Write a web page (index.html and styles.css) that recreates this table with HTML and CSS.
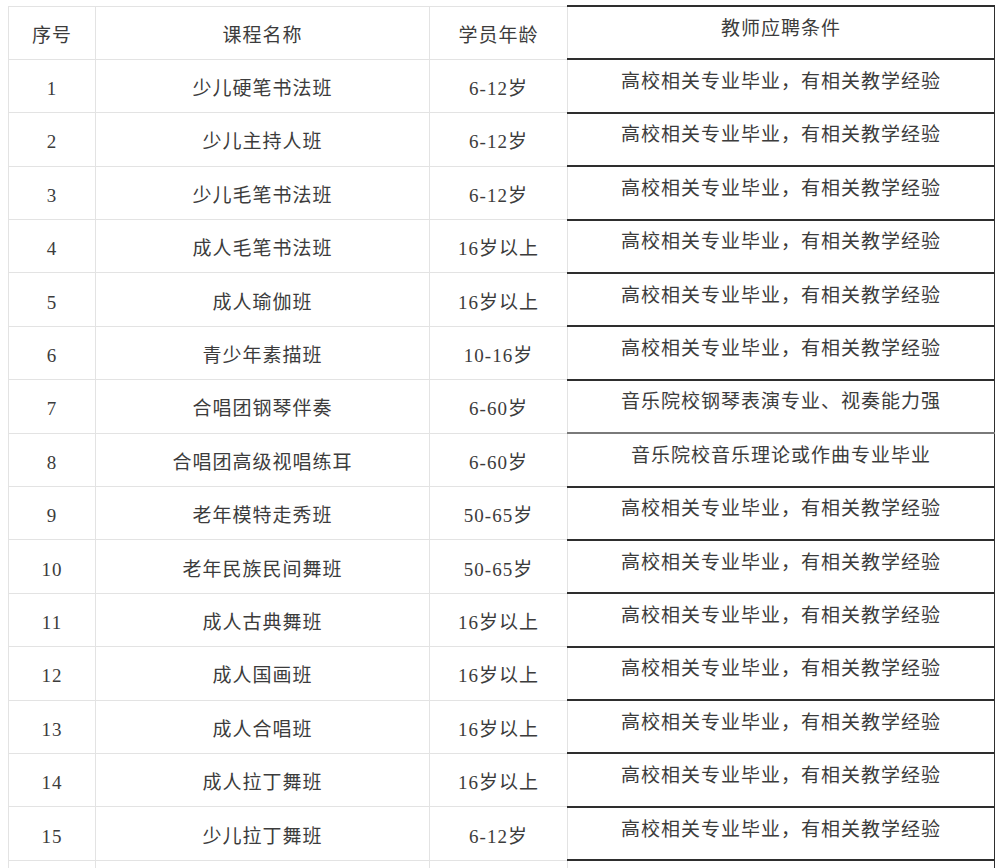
FILE: index.html
```html
<!DOCTYPE html>
<html lang="zh-CN">
<head>
<meta charset="utf-8">
<title>课程</title>
<link rel="stylesheet" href="styles.css">
</head>
<body>
<table class="grid">
  <colgroup>
    <col class="c-no">
    <col class="c-name">
    <col class="c-age">
    <col class="c-req">
  </colgroup>
  <tr class="head">
    <td>序号</td><td>课程名称</td><td>学员年龄</td><td class="req">教师应聘条件</td>
  </tr>
  <tr><td>1</td><td>少儿硬笔书法班</td><td>6-12岁</td><td class="req">高校相关专业毕业，有相关教学经验</td></tr>
  <tr><td>2</td><td>少儿主持人班</td><td>6-12岁</td><td class="req">高校相关专业毕业，有相关教学经验</td></tr>
  <tr><td>3</td><td>少儿毛笔书法班</td><td>6-12岁</td><td class="req">高校相关专业毕业，有相关教学经验</td></tr>
  <tr><td>4</td><td>成人毛笔书法班</td><td>16岁以上</td><td class="req">高校相关专业毕业，有相关教学经验</td></tr>
  <tr><td>5</td><td>成人瑜伽班</td><td>16岁以上</td><td class="req">高校相关专业毕业，有相关教学经验</td></tr>
  <tr><td>6</td><td>青少年素描班</td><td>10-16岁</td><td class="req">高校相关专业毕业，有相关教学经验</td></tr>
  <tr><td>7</td><td>合唱团钢琴伴奏</td><td>6-60岁</td><td class="req soft-bottom">音乐院校钢琴表演专业、视奏能力强</td></tr>
  <tr><td>8</td><td>合唱团高级视唱练耳</td><td>6-60岁</td><td class="req">音乐院校音乐理论或作曲专业毕业</td></tr>
  <tr><td>9</td><td>老年模特走秀班</td><td>50-65岁</td><td class="req">高校相关专业毕业，有相关教学经验</td></tr>
  <tr><td>10</td><td>老年民族民间舞班</td><td>50-65岁</td><td class="req">高校相关专业毕业，有相关教学经验</td></tr>
  <tr><td>11</td><td>成人古典舞班</td><td>16岁以上</td><td class="req">高校相关专业毕业，有相关教学经验</td></tr>
  <tr><td>12</td><td>成人国画班</td><td>16岁以上</td><td class="req">高校相关专业毕业，有相关教学经验</td></tr>
  <tr><td>13</td><td>成人合唱班</td><td>16岁以上</td><td class="req">高校相关专业毕业，有相关教学经验</td></tr>
  <tr><td>14</td><td>成人拉丁舞班</td><td>16岁以上</td><td class="req">高校相关专业毕业，有相关教学经验</td></tr>
  <tr><td>15</td><td>少儿拉丁舞班</td><td>6-12岁</td><td class="req">高校相关专业毕业，有相关教学经验</td></tr>
  <tr><td>&nbsp;</td><td>&nbsp;</td><td>&nbsp;</td><td class="req">&nbsp;</td></tr>
</table>
</body>
</html>
```

FILE: styles.css
```css
html, body {
  background: #ffffff;
}
body {
  margin: 5px 0 0 8px;
  font-family: "Liberation Serif", "Noto Sans CJK SC", serif;
  color: #3c3c3c;
}
.grid {
  border-collapse: collapse;
  table-layout: fixed;
  width: 986px;
  font-size: 19px;
  letter-spacing: 1px;
}
.c-no { width: 87px; }
.c-name { width: 334px; }
.c-age { width: 138px; }
.c-req { width: 427px; }
.grid tr {
  height: 53.4px;
}
.grid td {
  border: 1px solid #e3e3e3;
  text-align: center;
  vertical-align: middle;
  padding: 6px 0 0 0;
  white-space: nowrap;
  line-height: 24px;
}
.grid td.req {
  border-top: 2px solid #2e2e2e;
  border-bottom: 2px solid #2e2e2e;
  border-right: 1px solid #2e2e2e;
  padding: 0 0 8px 0;
}
.grid td.soft-bottom {
  border-bottom: 2px solid #7a7a7a;
}
```
